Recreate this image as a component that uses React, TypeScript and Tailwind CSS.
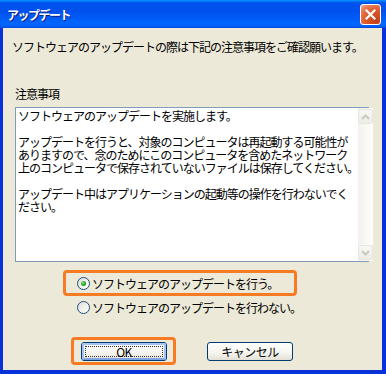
import React from "react";

const jp = { fontFamily: '"Noto Sans CJK JP", "Noto Sans", sans-serif' };

function Radio({ checked }: { checked?: boolean }) {
  return (
    <div className="relative w-[13px] h-[13px] rounded-full border border-[#1C5180] bg-[linear-gradient(135deg,#DCDCD7_0%,#F4F4F0_60%,#FFFFFF_100%)] shrink-0">
      {checked && (
        <div className="absolute left-[3px] top-[3px] w-[5px] h-[5px] rounded-full bg-[radial-gradient(circle_at_35%_35%,#7CE07A_0%,#21A121_60%,#0A7A0A_100%)]" />
      )}
    </div>
  );
}

function XPButton({ label, isDefault }: { label: string; isDefault?: boolean }) {
  return (
    <div className="relative w-[86px] h-[19px] rounded-[3px] border border-[#003C74] bg-[linear-gradient(to_bottom,#FFFFFF_0%,#F5F4EF_60%,#E3E0D5_100%)] flex items-center justify-center">
      {isDefault && (
        <div className="absolute inset-0 rounded-[2px] border-[2px] border-[#A6C3F3] border-b-[#7FA4E4]" />
      )}
      {isDefault && (
        <div className="absolute left-[3px] right-[3px] top-[3px] bottom-[3px] border border-dotted border-[#333]" />
      )}
      <span className="relative text-[12px] leading-[13px] text-black tracking-[-0.5px]" style={jp}>
        {label}
      </span>
    </div>
  );
}

function ScrollArrow({ up }: { up?: boolean }) {
  return (
    <div className="w-[15px] h-[15px] rounded-[2px] border border-[#E6E5DE] bg-[linear-gradient(to_bottom,#F7F7F5,#EDEDE7)] flex items-center justify-center">
      <svg width="9" height="6" viewBox="0 0 9 6">
        <path
          d={up ? "M1 5 L4.5 1.5 L8 5" : "M1 1 L4.5 4.5 L8 1"}
          fill="none"
          stroke="#CBCAC0"
          strokeWidth="2"
        />
      </svg>
    </div>
  );
}

export default function App() {
  const lines = [
    "ソフトウェアのアップデートを実施します。",
    "",
    "アップデートを行うと、対象のコンピュータは再起動する可能性が",
    "ありますので、念のためにこのコンピュータを含めたネットワーク",
    "上のコンピュータで保存されていないファイルは保存してください。",
    "",
    "アップデート中はアプリケーションの起動等の操作を行わないでく",
    "ださい。",
  ];
  return (
    <div className="w-[386px] h-[374px] flex flex-col overflow-hidden" style={jp}>
      {/* Title bar */}
      <div className="h-[28px] shrink-0 flex items-center justify-between pl-[7px] pr-[5px] pt-[1px] bg-[linear-gradient(180deg,#0997FF_0%,#0053EE_10%,#0050EE_40%,#0066FF_85%,#0060F8_93%,#0048DD_100%)]">
        <span className="text-white font-bold text-[12px] leading-[14px] tracking-[-1.5px] [text-shadow:1px_1px_0_#0A1E80]">
          アップデート
        </span>
        <div className="w-[21px] h-[21px] rounded-[3px] border border-white bg-[radial-gradient(circle_at_80%_85%,#C63F14_0%,#DC5A2C_50%,#E8805A_80%,#F5B49A_100%)] flex items-center justify-center">
          <svg width="11" height="11" viewBox="0 0 11 11">
            <path d="M1.5 1.5 L9.5 9.5 M9.5 1.5 L1.5 9.5" stroke="white" strokeWidth="2.2" strokeLinecap="square" />
          </svg>
        </div>
      </div>

      {/* Body with frame */}
      <div className="flex-1 flex border-l-[3px] border-r-[4px] border-b-[4px] border-[#0831D9]">
        <div className="flex-1 flex flex-col bg-[#ECE9D8] text-black">
          <div className="mt-[12px] ml-[9px] text-[12px] leading-[14px] tracking-[-1px] whitespace-nowrap">
            ソフトウェアのアップデートの際は下記の注意事項をご確認願います。
          </div>
          <div className="mt-[33px] ml-[12px] text-[12px] leading-[13px] tracking-[-1px]">注意事項</div>
          <div className="mt-[7px] ml-[12px] w-[354px] h-[155px] border border-[#7F9DB9] bg-white flex">
            <div className="flex-1 pl-[2px] pt-[1px] text-[12px] leading-[13px] tracking-[-1px] whitespace-nowrap">
              {lines.map((l, i) => (
                <div key={i} className="h-[13px]">
                  {l}
                </div>
              ))}
            </div>
            <div className="w-[17px] flex flex-col justify-between items-center py-[1px] bg-[linear-gradient(to_right,#F3F1EC,#FEFEFB)]">
              <ScrollArrow up />
              <ScrollArrow />
            </div>
          </div>

          {/* Radio options */}
          <div className="mt-[8px] ml-[60px] w-[234px] h-[26px] rounded-[4px] border-[3px] border-[#F77B22] flex items-center pl-[11px] gap-[2px]">
            <Radio checked />
            <span className="text-[12px] leading-[13px] tracking-[-1px] whitespace-nowrap">ソフトウェアのアップデートを行う。</span>
          </div>
          <div className="mt-[4px] ml-[74px] h-[14px] flex items-center gap-[2px]">
            <Radio />
            <span className="text-[12px] leading-[13px] tracking-[-1px] whitespace-nowrap">ソフトウェアのアップデートを行わない。</span>
          </div>

          {/* Buttons */}
          <div className="mt-[23px] ml-[68px] flex items-start">
            <div className="w-[105px] h-[28px] rounded-[4px] border-[3px] border-[#F77B22] pl-[7px] pt-[2px]">
              <XPButton label="OK" isDefault />
            </div>
            <div className="ml-[31px] mt-[5px]">
              <XPButton label="キャンセル" />
            </div>
          </div>
        </div>
      </div>
    </div>
  );
}
